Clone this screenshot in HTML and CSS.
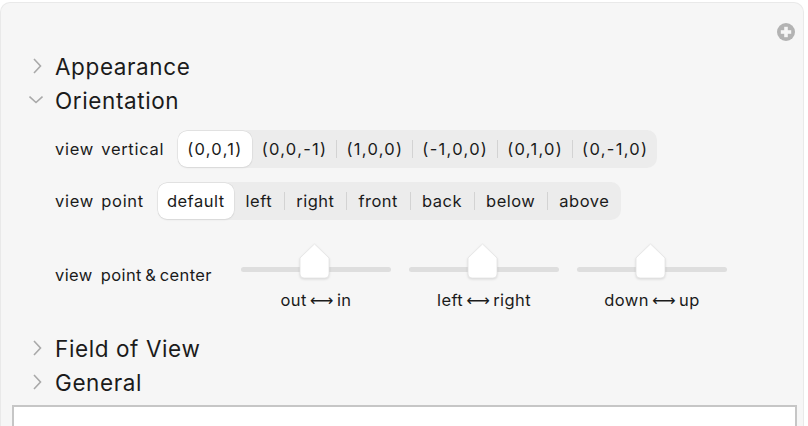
FILE: index.html
```html
<!DOCTYPE html>
<html>
<head>
<meta charset="utf-8">
<link rel="stylesheet" href="styles.css">
</head>
<body>
<div class="panel">
  <div class="toolbar">
    <svg class="plus" width="18" height="18" viewBox="0 0 18 18">
      <circle cx="9" cy="9" r="9" fill="#b3b3b3"/>
      <rect x="7.2" y="3.8" width="3.6" height="10.4" fill="#f6f6f6"/>
      <rect x="3.8" y="7.2" width="10.4" height="3.6" fill="#f6f6f6"/>
    </svg>
  </div>

  <div class="section">
    <svg class="chev" width="14" height="16" viewBox="0 0 14 16"><path d="M5 1 L11.5 8 L5 15" fill="none" stroke="#a9a9a9" stroke-width="1.6"/></svg>
    <span class="title">Appearance</span>
  </div>
  <div class="section">
    <svg class="chev" width="14" height="16" viewBox="0 0 14 16"><path d="M0.5 4.5 L7 10.5 L13.5 4.5" fill="none" stroke="#a9a9a9" stroke-width="1.6"/></svg>
    <span class="title">Orientation</span>
  </div>

  <div class="orient">
    <div class="row">
      <span class="label">view vertical</span>
      <div class="seg coords">
        <span class="item sel">(0,0,1)</span>
        <span class="item">(0,0,-1)</span>
        <span class="item div">(1,0,0)</span>
        <span class="item div">(-1,0,0)</span>
        <span class="item div">(0,1,0)</span>
        <span class="item div">(0,-1,0)</span>
      </div>
    </div>
    <div class="row">
      <span class="label">view point</span>
      <div class="seg">
        <span class="item sel">default</span>
        <span class="item">left</span>
        <span class="item div">right</span>
        <span class="item div">front</span>
        <span class="item div">back</span>
        <span class="item div">below</span>
        <span class="item div">above</span>
      </div>
    </div>
    <div class="sliders">
      <span class="label slabel">view point&#8201;&amp;&#8201;center</span>
      <div class="slider">
        <div class="trackbox">
          <div class="track"></div>
          <svg class="thumb" width="33" height="36" viewBox="0 0 33 36"><path d="M16.5 1 L31 15 L31 31 Q31 35 27 35 L6 35 Q2 35 2 31 L2 15 Z" fill="#fff" stroke="#e2e2e2" stroke-width="0.8" stroke-linejoin="round"/></svg>
        </div>
        <span class="cap">out<span class="arr">⟷</span>in</span>
      </div>
      <div class="slider">
        <div class="trackbox">
          <div class="track"></div>
          <svg class="thumb" width="33" height="36" viewBox="0 0 33 36"><path d="M16.5 1 L31 15 L31 31 Q31 35 27 35 L6 35 Q2 35 2 31 L2 15 Z" fill="#fff" stroke="#e2e2e2" stroke-width="0.8" stroke-linejoin="round"/></svg>
        </div>
        <span class="cap">left<span class="arr">⟷</span>right</span>
      </div>
      <div class="slider">
        <div class="trackbox">
          <div class="track"></div>
          <svg class="thumb" width="33" height="36" viewBox="0 0 33 36"><path d="M16.5 1 L31 15 L31 31 Q31 35 27 35 L6 35 Q2 35 2 31 L2 15 Z" fill="#fff" stroke="#e2e2e2" stroke-width="0.8" stroke-linejoin="round"/></svg>
        </div>
        <span class="cap">down<span class="arr">⟷</span>up</span>
      </div>
    </div>
  </div>

  <div class="section">
    <svg class="chev" width="14" height="16" viewBox="0 0 14 16"><path d="M5 1 L11.5 8 L5 15" fill="none" stroke="#a9a9a9" stroke-width="1.6"/></svg>
    <span class="title">Field of View</span>
  </div>
  <div class="section">
    <svg class="chev" width="14" height="16" viewBox="0 0 14 16"><path d="M5 1 L11.5 8 L5 15" fill="none" stroke="#a9a9a9" stroke-width="1.6"/></svg>
    <span class="title">General</span>
  </div>

  <div class="box"></div>
</div>
</body>
</html>
```

FILE: styles.css
```css
html, body {
  margin: 0;
  padding: 0;
  background: #ffffff;
  height: 426px;
  overflow: hidden;
}
body {
  font-family: Inter, "Noto Sans", "DejaVu Sans", sans-serif;
  color: #1b1b1b;
}
.panel {
  margin: 2px 4px 0 0;
  height: 430px;
  box-sizing: border-box;
  background: #f6f6f6;
  border: 1px solid #e9e9e9;
  border-bottom: none;
  border-radius: 10px 10px 0 0;
  padding: 20px 0 0 0;
  display: flex;
  flex-direction: column;
}
.toolbar {
  height: 26px;
  display: flex;
  justify-content: flex-end;
  align-items: flex-start;
  padding-right: 8px;
}
.plus { display: block; }
.section {
  height: 34px;
  display: flex;
  align-items: center;
  padding-left: 28px;
}
.chev {
  width: 14px;
  height: 16px;
  margin-right: 12px;
  flex: none;
}
.title {
  font-size: 22.5px;
  letter-spacing: 0.6px;
}
.orient {
  padding: 13px 0 0 54px;
  height: 214px;
  box-sizing: border-box;
  display: flex;
  flex-direction: column;
  gap: 14px;
}
.row {
  display: flex;
  align-items: center;
  gap: 14px;
}
.label {
  font-size: 16.5px;
  letter-spacing: 0.7px;
  word-spacing: 2px;
}
.seg {
  display: flex;
  background: #ececec;
  border-radius: 10px;
  height: 38px;
  align-items: stretch;
}
.item {
  font-size: 16.5px;
  letter-spacing: 0.5px;
  display: flex;
  align-items: center;
  padding: 0 12px;
  position: relative;
}
.coords .item {
  letter-spacing: 1.3px;
  padding: 0 9px 0 10px;
}
.item.div::before {
  content: "";
  position: absolute;
  left: 0;
  top: 10px;
  bottom: 10px;
  width: 1px;
  background: #d3d3d3;
}
.item.sel {
  background: #ffffff;
  border-radius: 9px;
  margin: 1px 0;
  padding: 0 9px;
  box-shadow: 0 0 0 0.5px #d8d8d8, 0 1px 2px rgba(0,0,0,0.08);
}
.sliders {
  display: flex;
  align-items: flex-start;
  gap: 18px;
  margin-top: 12px;
}
.slabel {
  margin-top: 19px;
  width: 168px;
  word-spacing: 3px;
  letter-spacing: 0.4px;
}
.slider {
  width: 150px;
  display: flex;
  flex-direction: column;
  align-items: center;
}
.trackbox {
  position: relative;
  width: 150px;
  height: 36px;
  display: flex;
  align-items: flex-start;
}
.track {
  margin-top: 21px;
  width: 150px;
  height: 5px;
  border-radius: 3px;
  background: #dedede;
}
.thumb {
  position: absolute;
  left: 57px;
  top: -3px;
  filter: drop-shadow(0 1px 1px rgba(0,0,0,0.12));
}
.cap {
  font-size: 16.5px;
  letter-spacing: 0.4px;
  margin-top: 8px;
}
.arr {
  font-family: "DejaVu Sans", sans-serif;
  margin: 0 3px;
}
.box {
  margin: 6px 6px 0 11px;
  flex: 1;
  background: #ffffff;
  border: 2px solid #c6c6c6;
  border-bottom: none;
}
```
